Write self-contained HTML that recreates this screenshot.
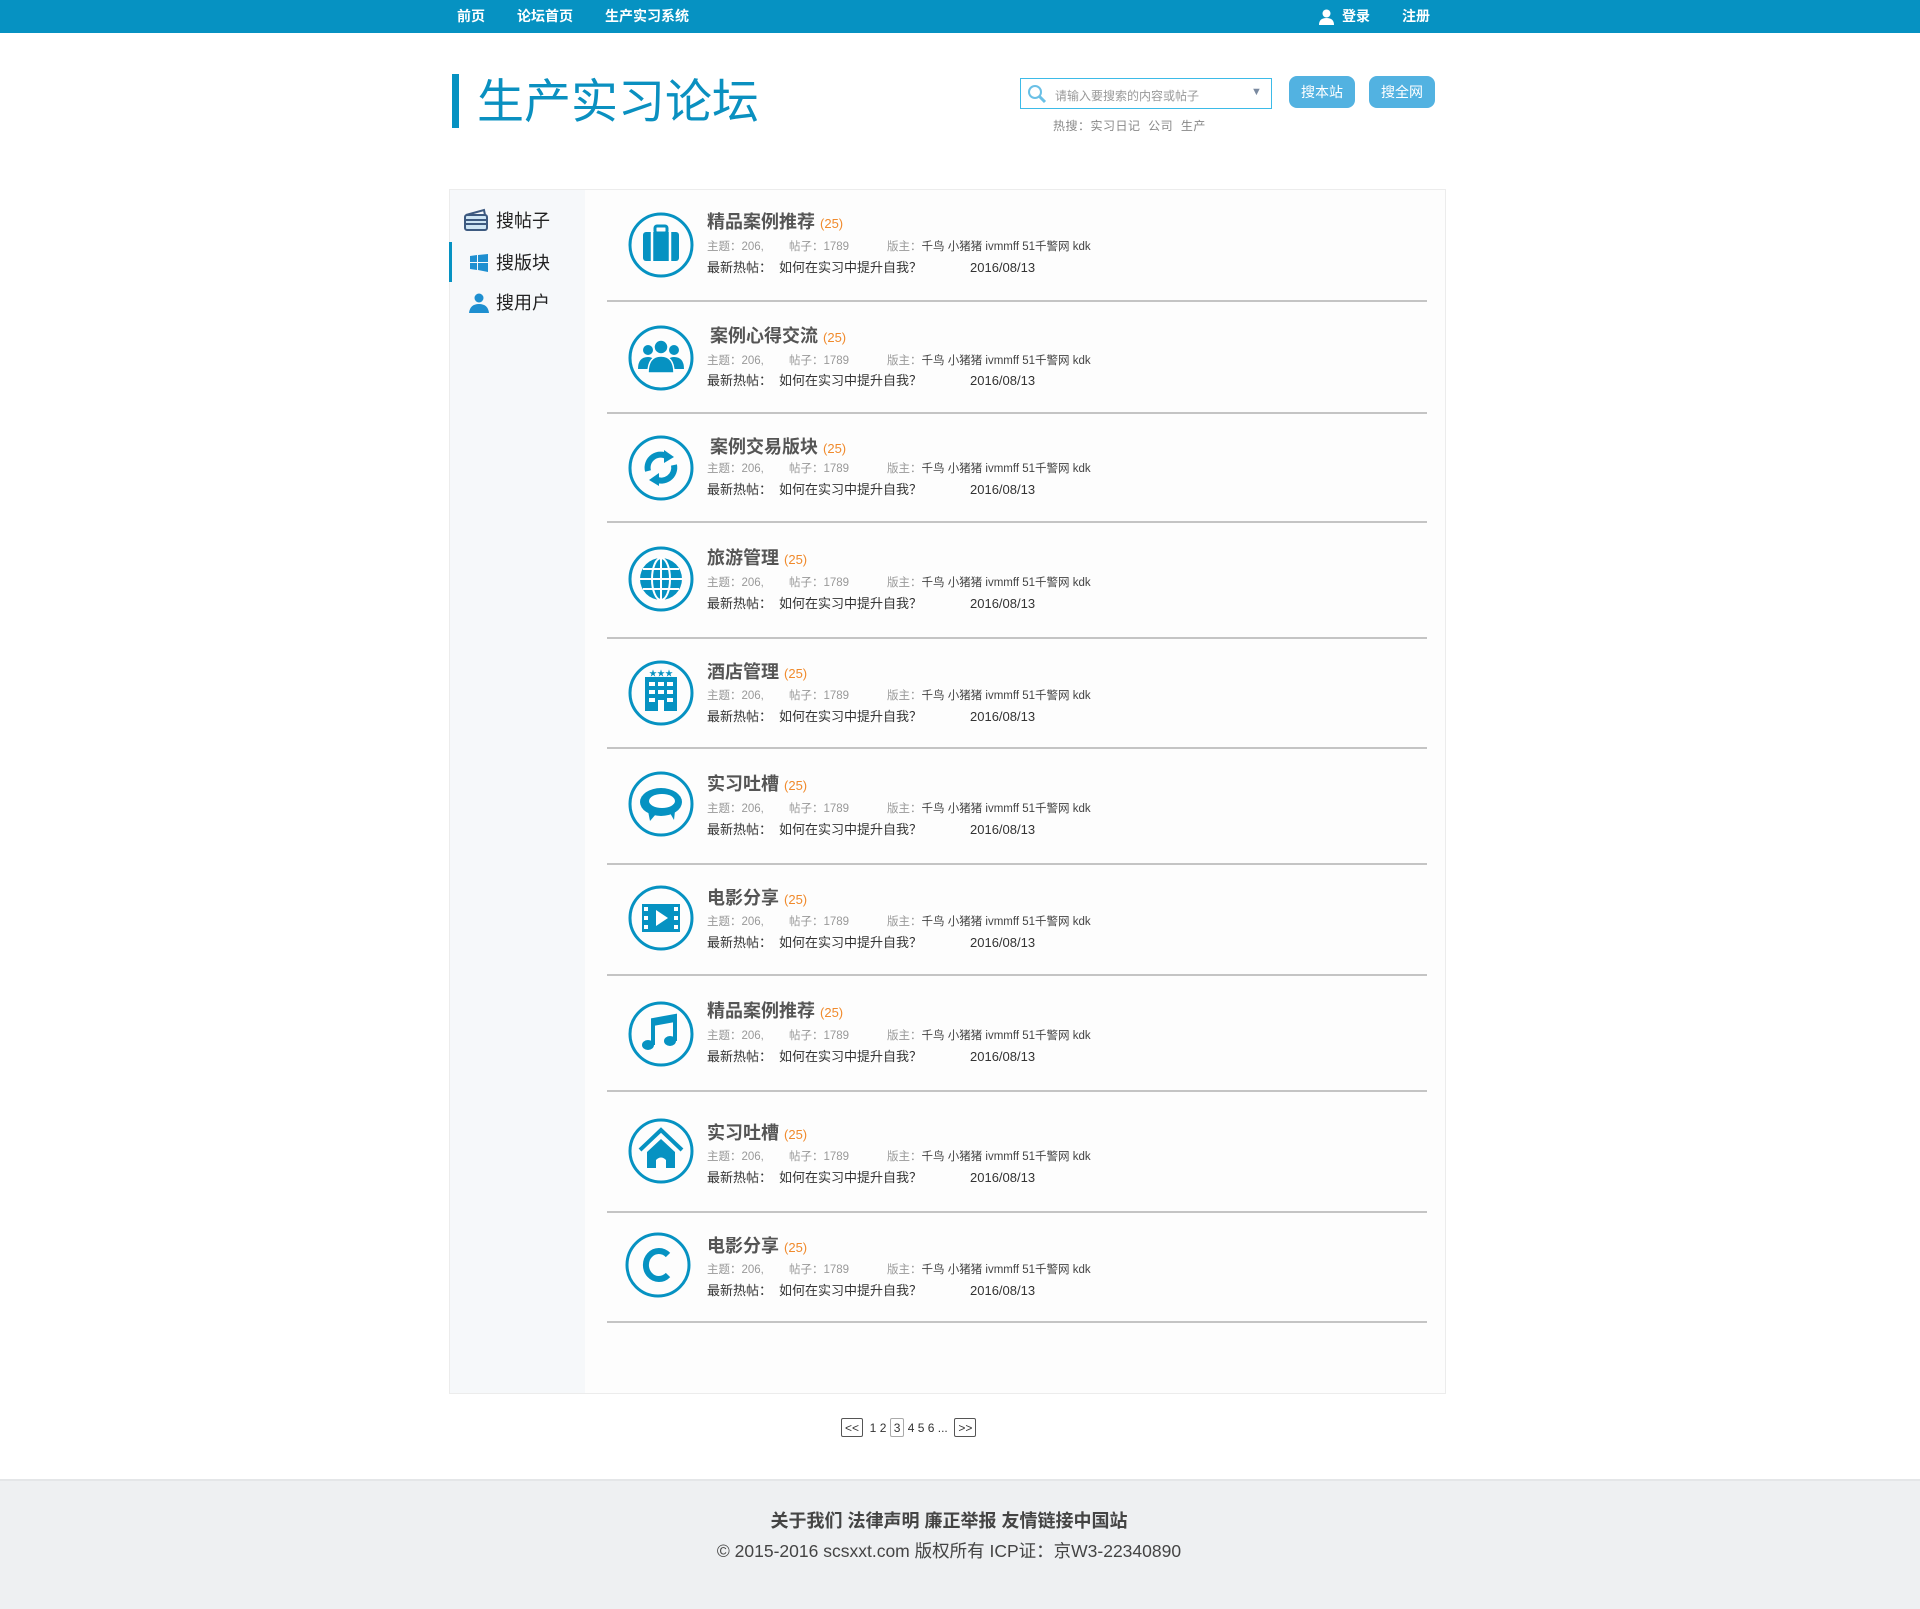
<!DOCTYPE html>
<html><head><meta charset="utf-8"><style>
*{margin:0;padding:0;box-sizing:border-box}
body{width:1920px;height:1609px;position:relative;background:#fff;font-family:"Liberation Sans","Noto Sans CJK SC",sans-serif;overflow:hidden}
.a{position:absolute;white-space:nowrap}
.top{position:absolute;left:0;top:0;width:1920px;height:33px;background:#0692c2}
.top span{position:absolute;top:7px;color:#fff;font-size:14px;font-weight:bold;line-height:18px}
.btn{position:absolute;top:76px;height:32px;width:66px;border-radius:8px;background:#52b2e1;color:#fff;font-size:14px;text-align:center;line-height:32px}
.main{position:absolute;left:449px;top:189px;width:997px;height:1205px;border:1px solid #ececec;background:#fdfdfd}
.side{position:absolute;left:0;top:0;width:135px;height:100%;background:#f6f8fa}
.si{position:absolute;left:46px;font-size:18px;color:#222;line-height:22px}
.row .t{position:absolute;left:707px;font-size:18px;font-weight:bold;color:#555;line-height:22px}
.row .t b{color:#f08a2c;font-weight:normal;font-size:13px}
.m{position:absolute;font-size:11.5px;color:#999;line-height:14px}
.m i{font-style:normal;color:#444}
.h{position:absolute;font-size:13px;color:#333;line-height:16px}
.line{position:absolute;left:607px;width:820px;height:2px;background:#c4c4c4}
.ic{position:absolute;left:628px;width:66px;height:66px}
.foot{position:absolute;left:0;top:1479px;width:1920px;height:130px;background:#eef0f2;border-top:2px solid #e4e6e8}
.pg{position:absolute;top:1418px;font-size:12px;color:#333;line-height:18px}
.pb{display:inline-block;border:1px solid #555;height:19px;padding:0 3px;border-radius:2px}
</style></head><body>
<div class="top">
<span style="left:457px">前页</span><span style="left:517px">论坛首页</span><span style="left:605px">生产实习系统</span>
<svg style="position:absolute;left:1319px;top:9px" width="15" height="16" viewBox="0 0 15 16"><circle cx="7.5" cy="4.5" r="4" fill="#fff"/><path d="M0 16 Q0 9 7.5 9 Q15 9 15 16Z" fill="#fff"/></svg>
<span style="left:1342px">登录</span><span style="left:1402px">注册</span>
</div>
<div class="a" style="left:452px;top:74px;width:7px;height:54px;background:#0692c2"></div>
<div class="a" style="left:477px;top:73px;font-size:47px;color:#0a90c0;line-height:58px">生产实习论坛</div>
<div class="a" style="left:1020px;top:78px;width:252px;height:31px;border:1px solid #3dbbe8;background:#fff">
<svg style="position:absolute;left:6px;top:5px" width="20" height="20" viewBox="0 0 20 20"><circle cx="8" cy="8" r="6" fill="none" stroke="#6ac0e6" stroke-width="2"/><path d="M12 12 L18 18" stroke="#6ac0e6" stroke-width="3"/></svg>
<span class="a" style="left:34px;top:8px;font-size:12px;color:#999">请输入要搜索的内容或帖子</span>
<span class="a" style="left:230px;top:7px;font-size:11px;color:#7a8aa0">▼</span>
</div>
<div class="btn" style="left:1289px">搜本站</div><div class="btn" style="left:1369px">搜全网</div>
<div class="a" style="left:1053px;top:117px;font-size:12px;color:#888;letter-spacing:0.5px">热搜：实习日记&nbsp;&nbsp;公司&nbsp;&nbsp;生产</div>

<div class="main"><div class="side">
<svg class="a" style="left:13px;top:17px" width="26" height="26" viewBox="0 0 26 26"><path d="M3 8 L21 3 L22 8" fill="none" stroke="#3d5a80" stroke-width="2"/><rect x="2" y="8" width="22" height="15" rx="2" fill="#cfe6f5" stroke="#3d5a80" stroke-width="2"/><path d="M2 13 H24 M2 17 H24" stroke="#3d5a80" stroke-width="2"/></svg>
<div class="si" style="top:20px">搜帖子</div>
<div class="a" style="left:-1px;top:52px;width:3px;height:40px;background:#0692c2"></div>
<svg class="a" style="left:20px;top:64px" width="18" height="18" viewBox="0 0 18 18"><path d="M0 2 L7 1 V8 H0Z M8 1 L18 0 V8 H8Z M0 9 H7 V16 L0 15Z M8 9 H18 V18 L8 16Z" fill="#1e8fd0"/></svg>
<div class="si" style="top:62px">搜版块</div>
<svg class="a" style="left:19px;top:103px" width="20" height="20" viewBox="0 0 20 20"><circle cx="10" cy="5" r="4.5" fill="#1e8fd0"/><path d="M0 20 Q1 11 10 11 Q19 11 20 20Z" fill="#1e8fd0"/></svg>
<div class="si" style="top:102px">搜用户</div>
</div></div>

<div class="row">
<div class="t" style="top:211px">精品案例推荐 <b>(25)</b></div><div class="m" style="left:707px;top:240px">主题：206,</div><div class="m" style="left:789px;top:240px">帖子：1789</div><div class="m" style="left:887px;top:240px">版主：<i>千鸟 小猪猪 ivmmff 51千警网 kdk</i></div><div class="h" style="left:707px;top:260px">最新热帖：</div><div class="h" style="left:779px;top:260px">如何在实习中提升自我？</div><div class="h" style="left:970px;top:260px">2016/08/13</div>
<svg class="ic" style="top:212px" viewBox="0 0 66 66"><circle cx="33" cy="33" r="31" fill="none" stroke="#0692c2" stroke-width="3"/><rect x="15" y="20" width="36" height="29" rx="3" fill="#0692c2"/><rect x="27" y="14" width="12" height="7" rx="2" fill="none" stroke="#0692c2" stroke-width="3"/><path d="M24 20V49M42 20V49" stroke="#fff" stroke-width="2.5"/></svg>
<div class="line" style="top:300px"></div>
</div>
<div class="row">
<div class="t" style="top:325px;left:710px">案例心得交流 <b>(25)</b></div><div class="m" style="left:707px;top:354px">主题：206,</div><div class="m" style="left:789px;top:354px">帖子：1789</div><div class="m" style="left:887px;top:354px">版主：<i>千鸟 小猪猪 ivmmff 51千警网 kdk</i></div><div class="h" style="left:707px;top:373px">最新热帖：</div><div class="h" style="left:779px;top:373px">如何在实习中提升自我？</div><div class="h" style="left:970px;top:373px">2016/08/13</div>
<svg class="ic" style="top:325px" viewBox="0 0 66 66"><circle cx="33" cy="33" r="31" fill="none" stroke="#0692c2" stroke-width="3"/><circle cx="20" cy="25" r="5" fill="#0692c2"/><circle cx="46" cy="25" r="5" fill="#0692c2"/><path d="M10 44 Q10 32 20 32 Q27 32 27 40V44Z M56 44 Q56 32 46 32 Q39 32 39 40V44Z" fill="#0692c2"/><circle cx="33" cy="22" r="7" stroke="#fff" stroke-width="1.5" fill="#0692c2"/><path d="M20 48 Q20 31 33 31 Q46 31 46 48Z" fill="#0692c2" stroke="#fff" stroke-width="1.5"/></svg>
<div class="line" style="top:412px"></div>
</div>
<div class="row">
<div class="t" style="top:436px;left:710px">案例交易版块 <b>(25)</b></div><div class="m" style="left:707px;top:462px">主题：206,</div><div class="m" style="left:789px;top:462px">帖子：1789</div><div class="m" style="left:887px;top:462px">版主：<i>千鸟 小猪猪 ivmmff 51千警网 kdk</i></div><div class="h" style="left:707px;top:482px">最新热帖：</div><div class="h" style="left:779px;top:482px">如何在实习中提升自我？</div><div class="h" style="left:970px;top:482px">2016/08/13</div>
<svg class="ic" style="top:435px" viewBox="0 0 66 66"><circle cx="33" cy="33" r="31" fill="none" stroke="#0692c2" stroke-width="3"/><path d="M20 36 A13 13 0 0 1 40 22" fill="none" stroke="#0692c2" stroke-width="6"/><path d="M36 15 L46 22 L36 28Z" fill="#0692c2"/><path d="M46 30 A13 13 0 0 1 27 44" fill="none" stroke="#0692c2" stroke-width="6"/><path d="M31 38 L21 45 L31 51Z" fill="#0692c2"/></svg>
<div class="line" style="top:521px"></div>
</div>
<div class="row">
<div class="t" style="top:547px">旅游管理 <b>(25)</b></div><div class="m" style="left:707px;top:576px">主题：206,</div><div class="m" style="left:789px;top:576px">帖子：1789</div><div class="m" style="left:887px;top:576px">版主：<i>千鸟 小猪猪 ivmmff 51千警网 kdk</i></div><div class="h" style="left:707px;top:596px">最新热帖：</div><div class="h" style="left:779px;top:596px">如何在实习中提升自我？</div><div class="h" style="left:970px;top:596px">2016/08/13</div>
<svg class="ic" style="top:546px" viewBox="0 0 66 66"><circle cx="33" cy="33" r="31" fill="none" stroke="#0692c2" stroke-width="3"/><circle cx="33" cy="33" r="21" fill="#0692c2"/><g stroke="#fff" stroke-width="2" fill="none"><ellipse cx="33" cy="33" rx="9" ry="21"/><path d="M33 12V54M12 33H54M15 23H51M15 43H51"/></g></svg>
<div class="line" style="top:637px"></div>
</div>
<div class="row">
<div class="t" style="top:661px">酒店管理 <b>(25)</b></div><div class="m" style="left:707px;top:689px">主题：206,</div><div class="m" style="left:789px;top:689px">帖子：1789</div><div class="m" style="left:887px;top:689px">版主：<i>千鸟 小猪猪 ivmmff 51千警网 kdk</i></div><div class="h" style="left:707px;top:709px">最新热帖：</div><div class="h" style="left:779px;top:709px">如何在实习中提升自我？</div><div class="h" style="left:970px;top:709px">2016/08/13</div>
<svg class="ic" style="top:660px" viewBox="0 0 66 66"><circle cx="33" cy="33" r="31" fill="none" stroke="#0692c2" stroke-width="3"/><rect x="17" y="17" width="32" height="34" fill="#0692c2"/><g fill="#fff"><rect x="21" y="22" width="6" height="4"/><rect x="30" y="22" width="6" height="4"/><rect x="39" y="22" width="6" height="4"/><rect x="21" y="30" width="6" height="4"/><rect x="30" y="30" width="6" height="4"/><rect x="39" y="30" width="6" height="4"/><rect x="21" y="38" width="6" height="4"/><rect x="39" y="38" width="6" height="4"/><rect x="30" y="40" width="6" height="11"/></g><text x="33" y="16" font-size="8" fill="#0692c2" text-anchor="middle">★★★</text></svg>
<div class="line" style="top:747px"></div>
</div>
<div class="row">
<div class="t" style="top:773px">实习吐槽 <b>(25)</b></div><div class="m" style="left:707px;top:802px">主题：206,</div><div class="m" style="left:789px;top:802px">帖子：1789</div><div class="m" style="left:887px;top:802px">版主：<i>千鸟 小猪猪 ivmmff 51千警网 kdk</i></div><div class="h" style="left:707px;top:822px">最新热帖：</div><div class="h" style="left:779px;top:822px">如何在实习中提升自我？</div><div class="h" style="left:970px;top:822px">2016/08/13</div>
<svg class="ic" style="top:771px" viewBox="0 0 66 66"><circle cx="33" cy="33" r="31" fill="none" stroke="#0692c2" stroke-width="3"/><ellipse cx="33" cy="31" rx="21" ry="14" fill="#0692c2"/><ellipse cx="34" cy="30" rx="13" ry="7" fill="#fff"/><path d="M20 40 L22 50 L28 43Z M42 42 L46 49 L47 40Z" fill="#0692c2"/></svg>
<div class="line" style="top:863px"></div>
</div>
<div class="row">
<div class="t" style="top:887px">电影分享 <b>(25)</b></div><div class="m" style="left:707px;top:915px">主题：206,</div><div class="m" style="left:789px;top:915px">帖子：1789</div><div class="m" style="left:887px;top:915px">版主：<i>千鸟 小猪猪 ivmmff 51千警网 kdk</i></div><div class="h" style="left:707px;top:935px">最新热帖：</div><div class="h" style="left:779px;top:935px">如何在实习中提升自我？</div><div class="h" style="left:970px;top:935px">2016/08/13</div>
<svg class="ic" style="top:885px" viewBox="0 0 66 66"><circle cx="33" cy="33" r="31" fill="none" stroke="#0692c2" stroke-width="3"/><rect x="14" y="19" width="38" height="28" fill="#0692c2"/><g fill="#fff"><rect x="16" y="22" width="4" height="4"/><rect x="16" y="31" width="4" height="4"/><rect x="16" y="40" width="4" height="4"/><rect x="46" y="22" width="4" height="4"/><rect x="46" y="31" width="4" height="4"/><rect x="46" y="40" width="4" height="4"/><path d="M28 25 L40 33 L28 41Z"/></g></svg>
<div class="line" style="top:974px"></div>
</div>
<div class="row">
<div class="t" style="top:1000px">精品案例推荐 <b>(25)</b></div><div class="m" style="left:707px;top:1029px">主题：206,</div><div class="m" style="left:789px;top:1029px">帖子：1789</div><div class="m" style="left:887px;top:1029px">版主：<i>千鸟 小猪猪 ivmmff 51千警网 kdk</i></div><div class="h" style="left:707px;top:1049px">最新热帖：</div><div class="h" style="left:779px;top:1049px">如何在实习中提升自我？</div><div class="h" style="left:970px;top:1049px">2016/08/13</div>
<svg class="ic" style="top:1001px" viewBox="0 0 66 66"><circle cx="33" cy="33" r="31" fill="none" stroke="#0692c2" stroke-width="3"/><path d="M25 44V19L47 15V40" fill="none" stroke="#0692c2" stroke-width="4"/><path d="M25 19L47 15V21L25 25Z" fill="#0692c2"/><ellipse cx="20" cy="44" rx="6" ry="5" fill="#0692c2"/><ellipse cx="42" cy="40" rx="6" ry="5" fill="#0692c2"/></svg>
<div class="line" style="top:1090px"></div>
</div>
<div class="row">
<div class="t" style="top:1122px">实习吐槽 <b>(25)</b></div><div class="m" style="left:707px;top:1150px">主题：206,</div><div class="m" style="left:789px;top:1150px">帖子：1789</div><div class="m" style="left:887px;top:1150px">版主：<i>千鸟 小猪猪 ivmmff 51千警网 kdk</i></div><div class="h" style="left:707px;top:1170px">最新热帖：</div><div class="h" style="left:779px;top:1170px">如何在实习中提升自我？</div><div class="h" style="left:970px;top:1170px">2016/08/13</div>
<svg class="ic" style="top:1118px" viewBox="0 0 66 66"><circle cx="33" cy="33" r="31" fill="none" stroke="#0692c2" stroke-width="3"/><path d="M12 32 L33 12 L54 32" fill="none" stroke="#0692c2" stroke-width="4"/><path d="M19 34 L33 21 L47 34 V50 H38 V42 Q33 37 28 42 V50 H19Z" fill="#0692c2"/></svg>
<div class="line" style="top:1211px"></div>
</div>
<div class="row">
<div class="t" style="top:1235px">电影分享 <b>(25)</b></div><div class="m" style="left:707px;top:1263px">主题：206,</div><div class="m" style="left:789px;top:1263px">帖子：1789</div><div class="m" style="left:887px;top:1263px">版主：<i>千鸟 小猪猪 ivmmff 51千警网 kdk</i></div><div class="h" style="left:707px;top:1283px">最新热帖：</div><div class="h" style="left:779px;top:1283px">如何在实习中提升自我？</div><div class="h" style="left:970px;top:1283px">2016/08/13</div>
<svg class="ic" style="top:1232px;left:625px" viewBox="0 0 66 66"><circle cx="33" cy="33" r="31" fill="none" stroke="#0692c2" stroke-width="3"/><path d="M43 23 A13 14 0 1 0 43 43" fill="none" stroke="#0692c2" stroke-width="6"/></svg>
<div class="line" style="top:1321px"></div>
</div>

<div class="pg" style="left:841px"><span class="pb">&lt;&lt;</span>&nbsp; 1 2 <span class="pb" style="border-color:#aaa">3</span> 4 5 6 ... &nbsp;<span class="pb">&gt;&gt;</span></div>
<div class="foot">
<div class="a" style="left:-11px;width:1920px;top:26px;text-align:center;font-size:18px;font-weight:bold;color:#444">关于我们 法律声明 廉正举报 友情链接中国站</div>
<div class="a" style="left:-11px;width:1920px;top:57px;text-align:center;font-size:17.5px;color:#444">© 2015-2016 scsxxt.com 版权所有 ICP证：京W3-22340890</div>
</div>
</body></html>
